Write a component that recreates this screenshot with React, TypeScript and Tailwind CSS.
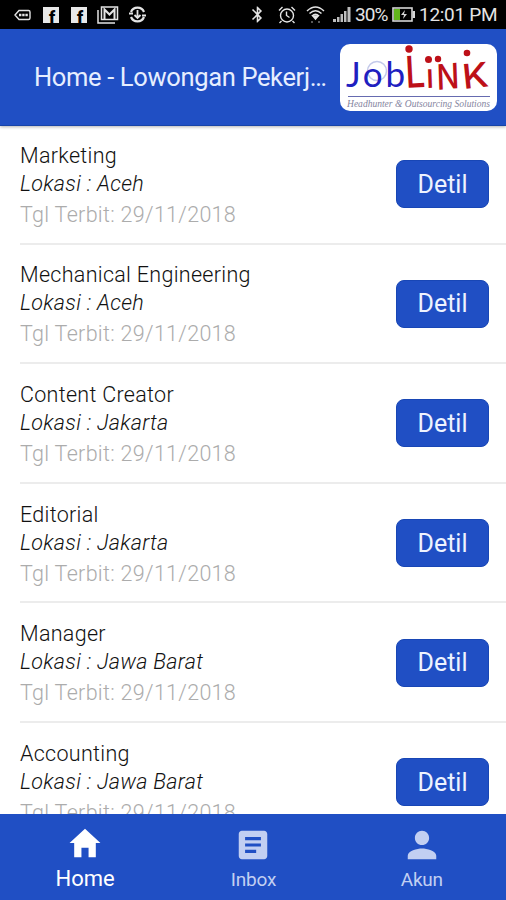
import React from 'react';
import { IoMdHome, IoMdPerson } from 'react-icons/io';
import { MdArticle, MdBluetooth } from 'react-icons/md';

interface Job {
  title: string;
  location: string;
  published: string;
}

const jobs: Job[] = [
  { title: 'Marketing', location: 'Aceh', published: '29/11/2018' },
  { title: 'Mechanical Engineering', location: 'Aceh', published: '29/11/2018' },
  { title: 'Content Creator', location: 'Jakarta', published: '29/11/2018' },
  { title: 'Editorial', location: 'Jakarta', published: '29/11/2018' },
  { title: 'Manager', location: 'Jawa Barat', published: '29/11/2018' },
  { title: 'Accounting', location: 'Jawa Barat', published: '29/11/2018' },
];

// White tile with a dark "f", sitting low and to the right
const FacebookIcon: React.FC = () => (
  <svg className="ml-[12px] h-4 w-4" viewBox="0 0 16 16">
    <rect width="16" height="16" fill="#e8e8e8" />
    <text x="6" y="15.5" fontFamily="Roboto, sans-serif" fontSize="17" fontWeight="900" fill="#000">f</text>
  </svg>
);

const StatusBar: React.FC = () => (
  <div className="flex h-[29px] shrink-0 items-center bg-black pl-[14px] pr-[9px] text-[#e4e4e4]">
    <svg className="h-3 w-[17px]" viewBox="0 0 17 12" fill="none" stroke="currentColor" strokeWidth="1.4">
      <path d="M5 1.5h9.5q1.5 0 1.5 1.5v6q0 1.5-1.5 1.5H5L1 6z" />
      <path d="M5 6h9" strokeWidth="2.4" strokeDasharray="2.4 .8" />
    </svg>
    <FacebookIcon />
    <FacebookIcon />
    <svg className="ml-[10px] h-[18px] w-[22px]" viewBox="0 0 22 18" fill="none" stroke="currentColor">
      <path d="M1 4v13h17" strokeWidth="1.5" />
      <rect x="4.5" y="1" width="16" height="12.5" strokeWidth="1.5" />
      <path d="M7.5 13V3.5l5 5 5-5V13" strokeWidth="2" />
    </svg>
    <svg className="ml-[10px] h-[17px] w-[17px]" viewBox="0 0 17 17" fill="none" stroke="currentColor" strokeWidth="2.2">
      <path d="M2 6a7 7 0 0 1 13 0M2 11a7 7 0 0 0 13 0" />
      <path d="M8.5 4v8M5.5 9l3 3 3-3M0 7.5h4M13 9.5h4" strokeWidth="1.8" />
    </svg>
    <div className="flex-1" />
    <MdBluetooth className="h-[19px] w-[19px]" />
    <svg className="ml-[11px] h-[18px] w-[18px]" viewBox="0 0 18 18" fill="none" stroke="currentColor" strokeWidth="1.4">
      <circle cx="9" cy="9.5" r="6.5" />
      <path d="M1 4.5 4.5 1M17 4.5 13.5 1M3.5 15l-2 2M14.5 15l2 2M8.5 5.5v4l3 2" />
    </svg>
    <svg className="ml-[10px] h-[19px] w-[19px]" viewBox="0 0 19 19" fill="none" stroke="currentColor" strokeWidth="1.5">
      <path d="M1 6q8.500-8 17 0M3.500 8.500q6-5.500 12 0M6 11q3.500-3.500 7 0" />
      <path d="m7 11 2.500 3 2.500-3z" fill="currentColor" />
      <path d="M5 17h2M12 17h2" stroke="#777" />
    </svg>
    <svg className="ml-[8px] h-[15px] w-[18px]" viewBox="0 0 18 15" fill="#bdbdbd">
      <path d="M0 12h3v3H0zM4 10h2.500v5H4zM7.500 7H10v8H7.500zM11 4h2.500v11H11zM14.500 0H17.500v15H14.500z" />
    </svg>
    <span className="ml-[4px] w-[34px] whitespace-nowrap text-[19px] leading-none tracking-[-0.9px]">30%</span>
    <svg className="ml-[3px] h-[15px] w-[23px]" viewBox="0 0 23 15">
      <rect x="1" y="1" width="19" height="13" fill="none" stroke="#d5d5d5" strokeWidth="1.6" />
      <rect x="2" y="2" width="6" height="11" fill="#62b51c" />
      <path d="M20.5 4H23v7h-2.5z" fill="#d5d5d5" />
      <path d="m13 3-4 5h3l-1 4 4-5h-3z" fill="#d5d5d5" />
    </svg>
    <span className="ml-[4px] w-[78px] whitespace-nowrap text-[19px] leading-none tracking-[-0.3px]">12:01 PM</span>
  </div>
);

const Logo: React.FC = () => (
  <svg className="h-[67px] w-[157px] shrink-0 rounded-[10px] bg-white" viewBox="0 0 157 67">
    <circle cx="37" cy="27" r="9.5" fill="none" stroke="#c3c9ea" strokeWidth="1.5" />
    <text x="6" y="43" fontFamily="Lato, sans-serif" fontSize="35" fill="#2020c0" textLength="59">Job</text>
    <g fill="#bd1018" fontFamily="Inter, sans-serif" fontWeight="500">
      <circle cx="69" cy="5" r="3.7" />
      <text transform="translate(66 44) rotate(-3) scale(.8 1)" fontSize="44">L</text>
      <circle cx="88.5" cy="15.5" r="3.5" />
      <text transform="translate(86.500 44) rotate(-2) scale(.9 1)" fontSize="34">ı</text>
      <circle cx="98" cy="15" r="3.2" />
      <text transform="translate(97 46) rotate(-5) skewX(-3) scale(.86 1)" fontSize="35">N</text>
      <circle cx="127" cy="9" r="3.3" />
      <text transform="translate(123.5 45) rotate(-6) scale(1.12 1)" fontSize="34">K</text>
    </g>
    <path d="M8 52.5h142" stroke="#666bb0" strokeWidth="1" />
    <text x="7" y="63" fontFamily="Liberation Serif, serif" fontStyle="italic" fontSize="10.5" fill="#8585a0" textLength="143" lengthAdjust="spacingAndGlyphs">
      Headhunter &amp; Outsourcing Solutions
    </text>
  </svg>
);

const Header: React.FC = () => (
  <header className="relative z-10 flex h-[97px] shrink-0 items-center justify-between border-b border-[#1744a8] bg-[#204fc4] pl-[34px] pr-[9px] shadow-[0_1px_3px_rgba(0,0,0,0.3)]">
    <h1 className="whitespace-nowrap text-[25.5px] tracking-[-0.35px] text-[#e6eeff]">Home - Lowongan Pekerj…</h1>
    <Logo />
  </header>
);

const JobRow: React.FC<{ job: Job }> = ({ job }) => (
  <li className="ml-5 flex h-[119.6px] shrink-0 items-center justify-between border-b-2 border-[#ececec] pr-[17px]">
    <div className="whitespace-nowrap pt-[3px] text-[21.5px] font-light leading-[28px] tracking-[0.3px] text-[#111]">
      <h2>{job.title}</h2>
      <p className="italic">Lokasi : {job.location}</p>
      <p className="mt-[3px] text-[#acacac]">Tgl Terbit: {job.published}</p>
    </div>
    <button className="mt-px h-[48px] w-[93px] rounded-[8px] border border-[#1846b5] bg-[#204fc4] text-[25px] leading-none text-[#eef3ff]">
      Detil
    </button>
  </li>
);

const TabBar: React.FC = () => (
  <nav className="relative z-10 grid h-[86px] shrink-0 grid-cols-3 bg-[#204fc4] pl-px text-[#c2cff2]">
    <div className="flex flex-col items-center pt-[10px] text-white">
      <IoMdHome className="h-[38px] w-[38px]" />
      <span className="mt-[3px] text-[22px] leading-[28px]">Home</span>
    </div>
    <div className="flex flex-col items-center pt-[12px]">
      <MdArticle className="h-[38px] w-[38px]" />
      <span className="mt-[2px] text-[19px] leading-[28px] tracking-[-0.2px]">Inbox</span>
    </div>
    <div className="flex flex-col items-center pt-[12px]">
      <IoMdPerson className="h-[38px] w-[38px]" />
      <span className="mt-[2px] text-[19px] leading-[28px] tracking-[-0.2px]">Akun</span>
    </div>
  </nav>
);

const App: React.FC = () => (
  <div className="flex h-[900px] w-[506px] flex-col overflow-hidden bg-white font-['Roboto',sans-serif]">
    <StatusBar />
    <Header />
    <ul className="-mt-px flex min-h-0 flex-1 flex-col overflow-hidden">
      {jobs.map((job) => (
        <JobRow key={job.title} job={job} />
      ))}
    </ul>
    <TabBar />
  </div>
);

export default App;
